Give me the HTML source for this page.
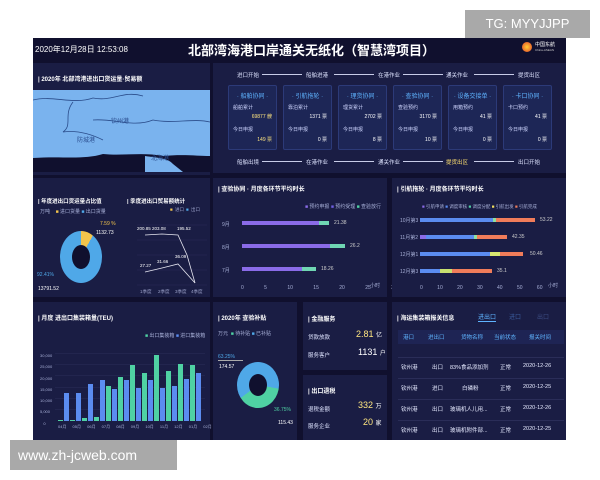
<!DOCTYPE html>
<html><head><meta charset="utf-8"><style>
*{margin:0;padding:0;box-sizing:border-box}
body{width:600px;height:480px;background:#fff;position:relative;overflow:hidden;font-family:"Liberation Sans","Noto Sans CJK SC",sans-serif;color:#dfe4ff}
.a{position:absolute}
#dash{left:33px;top:38px;width:533px;height:402px;background:#10102e}
.p{position:absolute;background:#1a1d44}
.t{position:absolute;font-size:7px;font-weight:bold;color:#fff;white-space:nowrap}
.s{position:absolute;font-size:5px;color:#a8b0d8;white-space:nowrap}
.box{position:absolute;width:49px;height:65px;background:#1d2656;border:1px solid #2c3a78;border-radius:2px}
.box .h{position:absolute;top:5px;width:100%;text-align:center;font-size:6px;color:#5fb4ff}
.box .l{position:absolute;left:4px;font-size:5px;color:#cfd6ff}
.box .v{position:absolute;right:4px;font-size:5px;color:#fff}
.fl{position:absolute;height:1px;background:#c8cce8}
.fs{position:absolute;font-size:5.5px;color:#dfe4ff;white-space:nowrap}
.bar{position:absolute;height:4px}
.gb{position:absolute;width:5px;background:#4fd1a3}
.bb{position:absolute;width:5px;background:#5b8cf0}
.tr{position:absolute;left:398px;width:166px;height:1px;background:#2a2d58}
.td{position:absolute;font-size:5.5px;color:#e6eaff;white-space:nowrap}
</style></head><body>
<div class="a" style="left:465px;top:10px;width:125px;height:28px;background:#a9a9a9;color:#fff;font-size:13px;line-height:28px;text-align:center">TG: MYYJJPP</div>
<div id="dash" class="a"></div>
<div class="a" style="left:35px;top:44px;font-size:8px;color:#fff">2020年12月28日 12:53:08</div>
<div class="a" style="left:188px;top:40px;font-size:13px;font-weight:bold;color:#fff;white-space:nowrap">北部湾海港口岸通关无纸化（智慧湾项目）</div>
<div class="a" style="left:522px;top:42px;width:10px;height:10px;border-radius:50%;background:radial-gradient(#ffcc33,#e0402a)"></div>
<div class="a" style="left:535px;top:41px;font-size:5px;color:#fff">中国东航</div>
<div class="a" style="left:535px;top:48px;font-size:3px;color:#ccc">China-ASEAN</div>

<div class="p" style="left:33px;top:63px;width:177px;height:112px"></div>
<div class="t" style="left:38px;top:74px;font-size:6px">| 2020年 北部湾港进出口货运量·贸易额</div>
<svg class="a" style="left:33px;top:90px" width="177" height="82"><rect width="177" height="82" fill="#7ab3ee"/>
<path d="M0,68 C30,66 50,70 70,64 C90,66 110,62 130,66 C150,64 165,66 177,66 L177,82 L0,82Z" fill="#10102e"/>
<path d="M112,66 C125,68 135,68 140,74 L150,82 L112,82Z" fill="#7ab3ee"/>
<path d="M0,10 C20,5 40,15 60,8 C80,12 90,0 110,6 M40,12 C30,25 40,35 30,42 C45,40 60,45 70,50 M60,30 C80,28 100,38 120,30 C140,34 160,28 177,32" fill="none" stroke="#2a4c8a" stroke-width="0.8"/>
<text x="78" y="33" font-size="6" fill="#2c4f90">钦州港</text><text x="44" y="52" font-size="6" fill="#2c4f90">防城港</text><text x="118" y="70" font-size="6" fill="#2c4f90">北海港</text></svg>

<div class="p" style="left:213px;top:63px;width:353px;height:110px"></div>
<div class="fs" style="left:237px;top:71px">进口开始</div><div class="fl" style="left:262px;top:74px;width:40px"></div>
<div class="fs" style="left:306px;top:71px">船舶进港</div><div class="fl" style="left:334px;top:74px;width:40px"></div>
<div class="fs" style="left:378px;top:71px">在港作业</div><div class="fl" style="left:403px;top:74px;width:40px"></div>
<div class="fs" style="left:446px;top:71px">通关作业</div><div class="fl" style="left:474px;top:74px;width:40px"></div>
<div class="fs" style="left:518px;top:71px">提货出区</div>
<div class="fs" style="left:237px;top:158px">船舶出境</div><div class="fl" style="left:262px;top:161px;width:40px"></div>
<div class="fs" style="left:306px;top:158px">在港作业</div><div class="fl" style="left:334px;top:161px;width:40px"></div>
<div class="fs" style="left:378px;top:158px">通关作业</div><div class="fl" style="left:403px;top:161px;width:40px"></div>
<div class="fs" style="left:446px;top:158px;color:#ffe070">提货出区</div><div class="fl" style="left:474px;top:161px;width:40px"></div>
<div class="fs" style="left:518px;top:158px">出口开始</div>
<div class="box" style="left:228px;top:85px"><div class="h">· 船舶协同 ·</div><div class="l" style="top:18px">船舶累计</div><div class="v" style="top:27px;color:#ffe680">69877 艘</div><div class="l" style="top:40px">今日申报</div><div class="v" style="top:50px;color:#ffe680">149 票</div></div>
<div class="box" style="left:283px;top:85px"><div class="h">· 引航拖轮 ·</div><div class="l" style="top:18px">靠泊累计</div><div class="v" style="top:27px">1371 票</div><div class="l" style="top:40px">今日申报</div><div class="v" style="top:50px">0 票</div></div>
<div class="box" style="left:338px;top:85px"><div class="h">· 理货协同 ·</div><div class="l" style="top:18px">理货累计</div><div class="v" style="top:27px">2702 票</div><div class="l" style="top:40px">今日申报</div><div class="v" style="top:50px">8 票</div></div>
<div class="box" style="left:393px;top:85px"><div class="h">· 查验协同 ·</div><div class="l" style="top:18px">查验预约</div><div class="v" style="top:27px">3170 票</div><div class="l" style="top:40px">今日申报</div><div class="v" style="top:50px">10 票</div></div>
<div class="box" style="left:448px;top:85px"><div class="h">· 设备交接单 ·</div><div class="l" style="top:18px">用箱预约</div><div class="v" style="top:27px">41 票</div><div class="l" style="top:40px">今日申报</div><div class="v" style="top:50px">0 票</div></div>
<div class="box" style="left:503px;top:85px"><div class="h">· 卡口协同 ·</div><div class="l" style="top:18px">卡口预约</div><div class="v" style="top:27px">41 票</div><div class="l" style="top:40px">今日申报</div><div class="v" style="top:50px">0 票</div></div>

<div class="p" style="left:33px;top:178px;width:177px;height:119px"></div>
<div class="t" style="left:38px;top:197px;font-size:5.5px">| 年度进出口货运量占比值</div>
<div class="t" style="left:127px;top:197px;font-size:5.5px">| 季度进出口贸易额统计</div>
<div class="s" style="left:40px;top:208px">万吨 &nbsp;&nbsp;&nbsp;<span style="color:#f3c44c">■</span> 进口货量 <span style="color:#4fa8e8">■</span> 出口货量</div>
<div class="s" style="left:100px;top:221px;color:#f3c44c">7.59 %</div>
<div class="s" style="left:96px;top:230px;color:#fff">1132.73</div>
<div class="a" style="left:60px;top:231px;width:42px;height:52px;border-radius:50%;background:conic-gradient(#f3c44c 0 8%,#4fa8e8 8% 100%)"></div>
<div class="a" style="left:72px;top:245px;width:18px;height:24px;border-radius:50%;background:#10102e"></div>
<div class="s" style="left:37px;top:272px;color:#4fa8e8">92.41%</div>
<div class="s" style="left:38px;top:286px;color:#fff">13791.52</div>
<svg class="a" style="left:125px;top:205px" width="85" height="90"><g fill="#9aa0c8" font-size="4.5">
<text x="45" y="6" fill="#f3c44c">■</text><text x="50" y="6">进口</text><text x="61" y="6" fill="#4fa8e8">■</text><text x="66" y="6">出口</text>
<text x="15" y="88">1季度</text><text x="33" y="88">2季度</text><text x="50" y="88">3季度</text><text x="66" y="88">4季度</text></g>
<g stroke="#2a2d58" stroke-width="0.5"><line x1="12" y1="20" x2="82" y2="20"/><line x1="12" y1="35" x2="82" y2="35"/><line x1="12" y1="50" x2="82" y2="50"/><line x1="12" y1="65" x2="82" y2="65"/><line x1="12" y1="80" x2="82" y2="80"/></g>
<polyline points="20,30 37,29 53,30 62,50 70,78" fill="none" stroke="#e6e6f0" stroke-width="0.8"/>
<polyline points="20,67 37,63 53,59 70,78" fill="none" stroke="#e6e6f0" stroke-width="0.8"/>
<g font-size="4.5" fill="#fff"><text x="12" y="25">200.85 203.08</text><text x="52" y="25">195.52</text><text x="15" y="62">27.27</text><text x="32" y="58">31.66</text><text x="50" y="53">36.09</text></g></svg>

<div class="p" style="left:213px;top:178px;width:174px;height:119px"></div>
<div class="t" style="left:218px;top:184px;font-size:6px">| 查验协同 · 月度各环节平均时长</div>
<div class="s" style="left:305px;top:203px"><span style="color:#8a6be8">■</span> 预约申报 <span style="color:#6e5ee0">■</span> 预约受理 <span style="color:#4fd1a3">■</span> 查验放行</div>
<div class="bar" style="left:242px;top:221px;width:77px;background:#8a6be8"></div><div class="bar" style="left:319px;top:221px;width:10px;background:#6fd6b3"></div><div class="s" style="left:334px;top:220px;color:#ccc">21.38</div>
<div class="bar" style="left:242px;top:244px;width:88px;background:#8a6be8"></div><div class="bar" style="left:330px;top:244px;width:15px;background:#6fd6b3"></div><div class="s" style="left:350px;top:243px;color:#ccc">26.2</div>
<div class="bar" style="left:242px;top:267px;width:60px;background:#8a6be8"></div><div class="bar" style="left:302px;top:267px;width:14px;background:#6fd6b3"></div><div class="s" style="left:321px;top:266px;color:#ccc">18.26</div>
<div class="s" style="left:222px;top:221px">9月</div><div class="s" style="left:222px;top:244px">8月</div><div class="s" style="left:222px;top:267px">7月</div>
<div class="s" style="left:241px;top:285px;word-spacing:19px">0 5 10 15 20 25 30</div><div class="s" style="left:370px;top:282px">小时</div>

<div class="p" style="left:392px;top:178px;width:174px;height:119px"></div>
<div class="t" style="left:397px;top:184px;font-size:6px">| 引航拖轮 · 月度各环节平均时长</div>
<div class="s" style="left:422px;top:204px;font-size:4.5px"><span style="color:#8a6be8">■</span> 引航申请 <span style="color:#5b8cf0">■</span> 调度审核 <span style="color:#4fd1a3">■</span> 调度分配 <span style="color:#f3e060">■</span> 引航出发 <span style="color:#f07c5a">■</span> 引航完成</div>
<div class="bar" style="left:420px;top:218px;width:73px;background:#5b8cf0"></div><div class="bar" style="left:493px;top:218px;width:3px;background:#8fe0a0"></div><div class="bar" style="left:496px;top:218px;width:39px;background:#f07c5a"></div><div class="s" style="left:540px;top:217px;color:#ccc">53.22</div>
<div class="bar" style="left:420px;top:235px;width:6px;background:#8a6be8"></div><div class="bar" style="left:426px;top:235px;width:48px;background:#5b8cf0"></div><div class="bar" style="left:474px;top:235px;width:3px;background:#8fe0a0"></div><div class="bar" style="left:477px;top:235px;width:30px;background:#f07c5a"></div><div class="s" style="left:512px;top:234px;color:#ccc">42.35</div>
<div class="bar" style="left:420px;top:252px;width:70px;background:#5b8cf0"></div><div class="bar" style="left:490px;top:252px;width:10px;background:#d8e870"></div><div class="bar" style="left:500px;top:252px;width:23px;background:#f07c5a"></div><div class="s" style="left:530px;top:251px;color:#ccc">50.46</div>
<div class="bar" style="left:420px;top:269px;width:20px;background:#5b8cf0"></div><div class="bar" style="left:440px;top:269px;width:12px;background:#c8e070"></div><div class="bar" style="left:452px;top:269px;width:40px;background:#f07c5a"></div><div class="s" style="left:497px;top:268px;color:#ccc">35.1</div>
<div class="s" style="left:400px;top:217px">10月第3</div><div class="s" style="left:400px;top:234px">11月第2</div><div class="s" style="left:400px;top:251px">12月第1</div><div class="s" style="left:400px;top:268px">12月第3</div>
<div class="s" style="left:420px;top:285px;word-spacing:13px">0 10 20 30 40 50 60</div><div class="s" style="left:548px;top:282px">小时</div>

<div class="p" style="left:33px;top:302px;width:177px;height:138px"></div>
<div class="t" style="left:38px;top:313px;font-size:6px">| 月度 进出口集装箱量(TEU)</div>
<div class="s" style="left:145px;top:332px"><span style="color:#4fd1a3">■</span> 出口集装箱 <span style="color:#5b8cf0">■</span> 进口集装箱</div>
<div class="a" style="left:55px;top:353px;width:150px;height:68px;background:repeating-linear-gradient(to bottom,#2a2d58 0 0.5px,transparent 0.5px 11.3px)"></div>
<div class="s" style="left:40px;top:350px;line-height:11.3px;font-size:4px">30,000<br>25,000<br>20,000<br>15,000<br>10,000<br>5,000<br>&nbsp;&nbsp;&nbsp;0</div>
<div class="gb" style="left:58px;top:420px;height:1px"></div><div class="bb" style="left:64px;top:393px;height:28px"></div>
<div class="gb" style="left:70px;top:420px;height:1px"></div><div class="bb" style="left:76px;top:393px;height:28px"></div>
<div class="gb" style="left:82px;top:418px;height:3px"></div><div class="bb" style="left:88px;top:384px;height:37px"></div>
<div class="gb" style="left:94px;top:417px;height:4px"></div><div class="bb" style="left:100px;top:380px;height:41px"></div>
<div class="gb" style="left:106px;top:386px;height:35px"></div><div class="bb" style="left:112px;top:389px;height:32px"></div>
<div class="gb" style="left:118px;top:377px;height:44px"></div><div class="bb" style="left:124px;top:380px;height:41px"></div>
<div class="gb" style="left:130px;top:365px;height:56px"></div><div class="bb" style="left:136px;top:388px;height:33px"></div>
<div class="gb" style="left:142px;top:373px;height:48px"></div><div class="bb" style="left:148px;top:380px;height:41px"></div>
<div class="gb" style="left:154px;top:355px;height:66px"></div><div class="bb" style="left:160px;top:388px;height:33px"></div>
<div class="gb" style="left:166px;top:371px;height:50px"></div><div class="bb" style="left:172px;top:386px;height:35px"></div>
<div class="gb" style="left:178px;top:364px;height:57px"></div><div class="bb" style="left:184px;top:379px;height:42px"></div>
<div class="gb" style="left:190px;top:365px;height:56px"></div><div class="bb" style="left:196px;top:373px;height:48px"></div>
<div class="s" style="left:58px;top:424px;font-size:4px;word-spacing:5px">04月 05月 06月 07月 08月 09月 10月 11月 12月 01月 02月 03月</div>

<div class="p" style="left:213px;top:302px;width:84px;height:138px"></div>
<div class="t" style="left:218px;top:313px;font-size:6px">| 2020年 查验补贴</div>
<div class="s" style="left:218px;top:330px">万元 &nbsp;<span style="color:#4fd1a3">■</span> 待补贴 <span style="color:#4fa8e8">■</span> 已补贴</div>
<div class="s" style="left:218px;top:354px;color:#4fa8e8">63.25%</div>
<div class="a" style="left:218px;top:360px;width:25px;height:1px;background:#aaa"></div>
<div class="s" style="left:219px;top:364px;color:#fff">174.57</div>
<div class="a" style="left:237px;top:362px;width:42px;height:46px;border-radius:50%;background:conic-gradient(from 100deg,#4fd1a3 0 37%,#4fa8e8 37% 100%)"></div>
<div class="a" style="left:249px;top:374px;width:18px;height:22px;border-radius:50%;background:#10102e"></div>
<div class="s" style="left:274px;top:407px;color:#4fd1a3">36.75%</div>
<div class="s" style="left:278px;top:420px;color:#fff">115.43</div>

<div class="p" style="left:303px;top:302px;width:84px;height:68px"></div>
<div class="t" style="left:308px;top:314px;font-size:6px">| 金融服务</div>
<div class="s" style="left:308px;top:333px;font-size:5.5px;color:#dfe4ff">贷款放款</div><div class="a" style="left:356px;top:329px;font-size:9px;color:#ffe680">2.81 <span style="font-size:6px;color:#fff">亿</span></div>
<div class="s" style="left:308px;top:351px;font-size:5.5px;color:#dfe4ff">服务客户</div><div class="a" style="left:358px;top:347px;font-size:9px;color:#fff">1131 <span style="font-size:6px">户</span></div>
<div class="p" style="left:303px;top:375px;width:84px;height:65px"></div>
<div class="t" style="left:308px;top:386px;font-size:6px">| 出口退税</div>
<div class="s" style="left:308px;top:405px;font-size:5.5px;color:#dfe4ff">退税金额</div><div class="a" style="left:358px;top:400px;font-size:9px;color:#ffe680">332 <span style="font-size:6px;color:#fff">万</span></div>
<div class="s" style="left:308px;top:422px;font-size:5.5px;color:#dfe4ff">服务企业</div><div class="a" style="left:363px;top:417px;font-size:9px;color:#ffe680">20 <span style="font-size:6px;color:#fff">家</span></div>

<div class="p" style="left:392px;top:302px;width:174px;height:138px"></div>
<div class="t" style="left:397px;top:313px;font-size:6px">| 海运集装箱报关信息</div>
<div class="a" style="left:478px;top:312px;font-size:6px;color:#5fb4ff;border-bottom:1px solid #5fb4ff">进出口</div>
<div class="a" style="left:509px;top:312px;font-size:6px;color:#3a5a9a">进口</div><div class="a" style="left:537px;top:312px;font-size:6px;color:#3a4a80">出口</div>
<div class="a" style="left:398px;top:330px;width:166px;height:14px;background:#1e2454"></div>
<div class="td" style="left:403px;top:333px;color:#5fb4ff">港口</div><div class="td" style="left:428px;top:333px;color:#5fb4ff">进出口</div><div class="td" style="left:461px;top:333px;color:#5fb4ff">货物名称</div><div class="td" style="left:494px;top:333px;color:#5fb4ff">当前状态</div><div class="td" style="left:529px;top:333px;color:#5fb4ff">报关时间</div>
<div class="tr" style="top:357px"></div><div class="tr" style="top:378px"></div><div class="tr" style="top:399px"></div><div class="tr" style="top:420px"></div>
<div class="td" style="left:401px;top:363px">钦州港</div><div class="td" style="left:432px;top:363px">出口</div><div class="td" style="left:450px;top:363px">83%食品添加剂</div><div class="td" style="left:500px;top:363px">正常</div><div class="td" style="left:523px;top:363px">2020-12-26</div>
<div class="td" style="left:401px;top:384px">钦州港</div><div class="td" style="left:432px;top:384px">进口</div><div class="td" style="left:462px;top:384px">白磷粉</div><div class="td" style="left:500px;top:384px">正常</div><div class="td" style="left:523px;top:384px">2020-12-25</div>
<div class="td" style="left:401px;top:405px">钦州港</div><div class="td" style="left:432px;top:405px">出口</div><div class="td" style="left:450px;top:405px">玻璃机人儿用...</div><div class="td" style="left:500px;top:405px">正常</div><div class="td" style="left:523px;top:405px">2020-12-26</div>
<div class="td" style="left:401px;top:426px">钦州港</div><div class="td" style="left:432px;top:426px">出口</div><div class="td" style="left:450px;top:426px">玻璃机附件部...</div><div class="td" style="left:500px;top:426px">正常</div><div class="td" style="left:523px;top:426px">2020-12-25</div>

<div class="a" style="left:10px;top:440px;width:167px;height:30px;background:#a9a9a9;color:#fff;font-size:14px;line-height:30px;padding-left:8px">www.zh-jcweb.com</div>
</body></html>
